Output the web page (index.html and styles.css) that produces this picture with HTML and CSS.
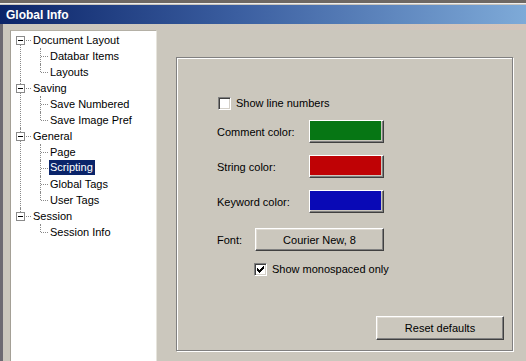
FILE: index.html
```html
<!DOCTYPE html>
<html>
<head>
<meta charset="utf-8">
<link rel="stylesheet" href="styles.css">
</head>
<body>
<div class="window">
  <div class="frame-top"></div>
  <div class="titlebar"><span class="title">Global Info</span></div>
  <div class="band"></div>
  <div class="main">
    <div class="tree">
      <ul class="roots">
        <li class="root">
          <span class="exp"></span><span class="label">Document Layout</span>
          <ul class="kids">
            <li class="kid"><span class="label">Databar Items</span></li>
            <li class="kid"><span class="label">Layouts</span></li>
          </ul>
        </li>
        <li class="root">
          <span class="exp"></span><span class="label">Saving</span>
          <ul class="kids">
            <li class="kid"><span class="label">Save Numbered</span></li>
            <li class="kid"><span class="label">Save Image Pref</span></li>
          </ul>
        </li>
        <li class="root">
          <span class="exp"></span><span class="label">General</span>
          <ul class="kids">
            <li class="kid"><span class="label">Page</span></li>
            <li class="kid"><span class="label selected">Scripting</span></li>
            <li class="kid"><span class="label">Global Tags</span></li>
            <li class="kid"><span class="label">User Tags</span></li>
          </ul>
        </li>
        <li class="root">
          <span class="exp"></span><span class="label">Session</span>
          <ul class="kids">
            <li class="kid"><span class="label">Session Info</span></li>
          </ul>
        </li>
      </ul>
    </div>
    <div class="pane">
      <div class="group">
        <div class="check-row first">
          <span class="checkbox"></span><span class="check-text">Show line numbers</span>
        </div>
        <div class="color-row first-color">
          <span class="field-label">Comment color:</span>
          <span class="btn swatch-btn"><span class="swatch green"></span></span>
        </div>
        <div class="color-row">
          <span class="field-label">String color:</span>
          <span class="btn swatch-btn"><span class="swatch red"></span></span>
        </div>
        <div class="color-row">
          <span class="field-label">Keyword color:</span>
          <span class="btn swatch-btn"><span class="swatch blue"></span></span>
        </div>
        <div class="font-row">
          <span class="font-label">Font:</span>
          <span class="btn font-btn">Courier New, 8</span>
        </div>
        <div class="check-row mono">
          <span class="checkbox"><svg width="7" height="7" viewBox="0 0 7 7"><path d="M0 2h1v1h1v1h1v-1h1v-1h1v-1h1v-1h1v3h-1v1h-1v1h-1v1h-1v1h-1v-1h-1v-1h-1z" fill="#000"/></svg></span><span class="check-text">Show monospaced only</span>
        </div>
        <div class="reset-row">
          <span class="btn reset-btn">Reset defaults</span>
        </div>
      </div>
    </div>
  </div>
</div>
</body>
</html>
```

FILE: styles.css
```css
* { box-sizing: border-box; }
html, body { margin: 0; padding: 0; }
body {
  width: 526px;
  height: 361px;
  overflow: hidden;
  background: #cbc7bd;
  font-family: "Liberation Sans", Arial, sans-serif;
  font-size: 11px;
  color: #000;
}
.window {
  height: 361px;
  border-left: 3px solid #6d6a72;
}
.frame-top {
  height: 5px;
  margin-left: -3px;
  background: linear-gradient(to bottom, #6e6863 0, #6e6863 3px, #eeeeee 3px, #eeeeee 4px, #c8c4bc 4px);
}
.titlebar {
  height: 19px;
  margin-left: -3px;
  background: linear-gradient(to right, #0b2468 0%, #3b5ea0 45%, #7eaad8 100%);
  display: flex;
  align-items: center;
  padding-left: 6px;
}
.title {
  color: #fff;
  font-weight: bold;
  font-size: 12px;
}
.band {
  height: 6px;
  background: linear-gradient(to right, #cbc7bd 0%, #cec6be 50%, #d4c4ba 100%);
}
.main {
  display: flex;
  align-items: flex-start;
}
.tree {
  margin-left: 7px;
  width: 147px;
  height: 340px;
  background: #fff;
  border-top: 1px solid #b4b0a6;
  border-left: 1px solid #a4a096;
  border-right: 1px solid #e6e4dc;
  padding-top: 1px;
}
.tree ul { list-style: none; margin: 0; padding: 0; }
.root {
  position: relative;
  padding-left: 21px;
}
.root::before {
  content: "";
  position: absolute;
  left: 9px;
  top: 0;
  bottom: 0;
  border-left: 1px dotted #8a8a8a;
}
.root:first-child::before { top: 8px; }
.root:last-child::before { bottom: auto; height: 8px; }
.root::after {
  content: "";
  position: absolute;
  left: 10px;
  top: 8px;
  width: 10px;
  border-top: 1px dotted #8a8a8a;
}
.exp {
  position: absolute;
  left: 5px;
  top: 4px;
  width: 9px;
  height: 9px;
  background: #fff;
  border: 1px solid #8a8a8a;
  z-index: 1;
}
.exp::after {
  content: "";
  position: absolute;
  left: 1px;
  top: 3px;
  width: 5px;
  height: 1px;
  background: #000;
}
.label {
  display: inline-block;
  height: 16px;
  line-height: 16px;
  padding: 0 2px 0 1px;
  white-space: nowrap;
  vertical-align: top;
}
.label.selected {
  background: #0a246a;
  color: #fff;
  height: 15px;
  line-height: 15px;
}
.kid {
  position: relative;
  padding-left: 17px;
  height: 16px;
}
.kid::before {
  content: "";
  position: absolute;
  left: 8px;
  top: 0;
  bottom: 0;
  border-left: 1px dotted #8a8a8a;
}
.kid:last-child::before { bottom: auto; height: 8px; }
.kid::after {
  content: "";
  position: absolute;
  left: 9px;
  top: 8px;
  width: 7px;
  border-top: 1px dotted #8a8a8a;
}
.pane {
  margin-left: 19px;
  margin-top: 27px;
}
.group {
  width: 337px;
  height: 294px;
  border: 1px solid #808080;
  box-shadow: inset 1px 1px #fff, 1px 1px #fff;
  display: flex;
  flex-direction: column;
  padding-left: 40px;
}
.check-row {
  display: flex;
  align-items: center;
  height: 14px;
}
.check-row.first { margin-top: 38px; margin-left: 1px; }
.check-row.mono { margin-top: 11px; margin-left: 37px; }
.checkbox {
  width: 13px;
  height: 13px;
  background: #fff;
  border: 1px solid;
  border-color: #808080 #fff #fff #808080;
  box-shadow: inset 1px 1px #404040, inset -1px -1px #d4d0c8;
  display: flex;
  align-items: center;
  justify-content: center;
}
.checkbox svg { display: block; }
.check-text { margin-left: 5px; }
.color-row {
  display: flex;
  align-items: center;
  margin-top: 12px;
  height: 23px;
}
.color-row.first-color { margin-top: 10px; }
.field-label { width: 92px; }
.btn {
  display: flex;
  align-items: center;
  justify-content: center;
  background: #cbc7bd;
  border: 1px solid;
  border-color: #fff #404040 #404040 #fff;
  box-shadow: inset -1px -1px #808080, inset 1px 1px #dedad2;
}
.swatch-btn {
  width: 75px;
  height: 23px;
  padding: 0 2px 2px 0;
}
.swatch { display: block; width: 100%; height: 100%; }
.green { background: #067614; }
.red { background: #bf0205; }
.blue { background: #0909b6; }
.font-row {
  display: flex;
  align-items: center;
  margin-top: 15px;
  height: 23px;
}
.font-label { width: 38px; }
.font-btn { width: 129px; height: 23px; }
.reset-row {
  margin-top: auto;
  margin-bottom: 10px;
  display: flex;
  justify-content: flex-end;
  padding-right: 8px;
}
.reset-btn { width: 128px; height: 24px; }
```
